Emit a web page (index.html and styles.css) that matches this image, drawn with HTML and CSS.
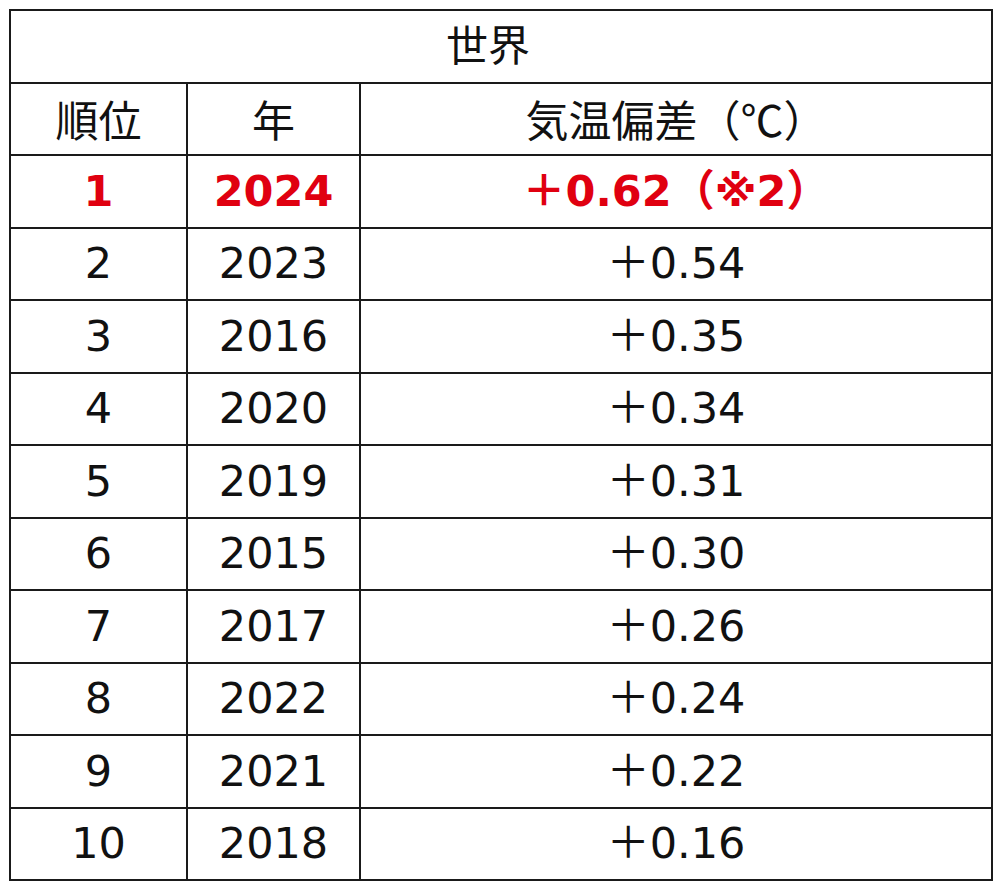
FILE: index.html
```html
<!DOCTYPE html>
<html lang="ja">
<head>
<meta charset="utf-8">
<link rel="stylesheet" href="styles.css">
</head>
<body>
<table class="rank">
  <colgroup>
    <col class="c-rank">
    <col class="c-year">
    <col class="c-val">
  </colgroup>
  <tr><th colspan="3" class="title"><span class="title-text">世界</span></th></tr>
  <tr class="head"><th>順位</th><th>年</th><th>気温偏差（℃）</th></tr>
  <tr class="top"><td>1</td><td>2024</td><td>＋0.62（※2）</td></tr>
  <tr><td>2</td><td>2023</td><td>＋0.54</td></tr>
  <tr><td>3</td><td>2016</td><td>＋0.35</td></tr>
  <tr><td>4</td><td>2020</td><td>＋0.34</td></tr>
  <tr><td>5</td><td>2019</td><td>＋0.31</td></tr>
  <tr><td>6</td><td>2015</td><td>＋0.30</td></tr>
  <tr><td>7</td><td>2017</td><td>＋0.26</td></tr>
  <tr><td>8</td><td>2022</td><td>＋0.24</td></tr>
  <tr><td>9</td><td>2021</td><td>＋0.22</td></tr>
  <tr><td>10</td><td>2018</td><td>＋0.16</td></tr>
</table>
</body>
</html>
```
FILE: styles.css
```css
html, body {
  margin: 0;
  padding: 0;
  background: #ffffff;
}
body {
  padding: 9px 0 0 9px;
  font-family: "DejaVu Sans", "Noto Sans CJK JP", sans-serif;
  color: #111111;
}
.rank {
  border-collapse: collapse;
  table-layout: fixed;
  width: 982px;
  border: 2px solid #1a1a1a;
}
.c-rank { width: 177px; }
.c-year { width: 173px; }
.c-val { width: 632px; }
.rank th, .rank td {
  border: 2px solid #1a1a1a;
  height: 70.5px;
  padding: 0;
  text-align: center;
  vertical-align: middle;
  font-size: 43px;
  font-weight: normal;
  line-height: 1;
}
.rank th {
  font-family: "Noto Sans CJK JP", sans-serif;
  font-weight: 400;
  font-size: 43px;
}
.rank th.title {
  font-size: 42px;
}
.title-text {
  display: inline-block;
  padding-right: 26px;
  position: relative;
  top: -3px;
}
.top td {
  color: #e00010;
  font-weight: bold;
}
```
